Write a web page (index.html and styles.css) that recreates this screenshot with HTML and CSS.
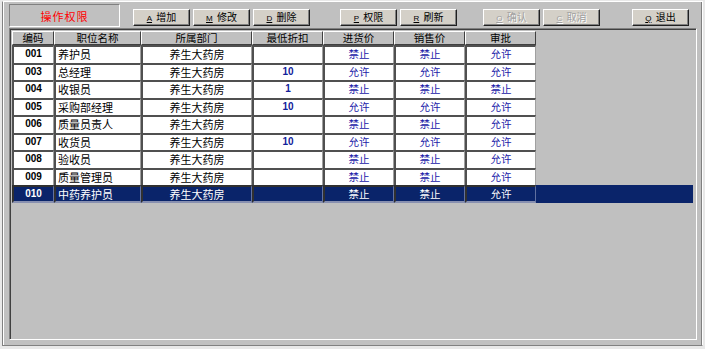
FILE: index.html
```html
<!DOCTYPE html>
<html lang="zh-CN">
<head>
    <meta charset="UTF-8">
    <title>操作权限</title>
    <link rel="stylesheet" href="styles.css">
</head>
<body>
    <div class="window">
        <div class="toolbar">
            <div class="caption">操作权限</div>
            <div class="btn-group g1">
                <button class="btn"><u>A</u> 增加</button>
                <button class="btn"><u>M</u> 修改</button>
                <button class="btn"><u>D</u> 删除</button>
            </div>
            <div class="btn-group g2">
                <button class="btn"><u>P</u> 权限</button>
                <button class="btn"><u>R</u> 刷新</button>
            </div>
            <div class="btn-group g3">
                <button class="btn" disabled><u>O</u> 确认</button>
                <button class="btn" disabled><u>C</u> 取消</button>
            </div>
            <div class="btn-group g4">
                <button class="btn"><u>Q</u> 退出</button>
            </div>
        </div>

        <div class="grid">
            <div class="row head">
                <div class="cell">编码</div>
                <div class="cell">职位名称</div>
                <div class="cell">所属部门</div>
                <div class="cell">最低折扣</div>
                <div class="cell">进货价</div>
                <div class="cell">销售价</div>
                <div class="cell">审批</div>
            </div>
            <div id="rows"></div>
        </div>
    </div>

<script>
const data = [
    ['001', '养护员', '', '禁止', '禁止', '允许'],
    ['003', '总经理', '10', '允许', '允许', '允许'],
    ['004', '收银员', '1', '禁止', '禁止', '禁止'],
    ['005', '采购部经理', '10', '允许', '允许', '允许'],
    ['006', '质量员责人', '', '禁止', '禁止', '允许'],
    ['007', '收货员', '10', '允许', '允许', '允许'],
    ['008', '验收员', '', '禁止', '禁止', '允许'],
    ['009', '质量管理员', '', '禁止', '禁止', '允许'],
    ['010', '中药养护员', '', '禁止', '禁止', '允许']
];

const rows = document.getElementById('rows');
data.forEach((r, i) => {
    const sel = i === data.length - 1 ? ' selected' : '';
    rows.innerHTML += `<div class="row${sel}">
        <div class="cell code">${r[0]}</div>
        <div class="cell name">${r[1]}</div>
        <div class="cell">养生大药房</div>
        <div class="cell num">${r[2]}</div>
        <div class="cell perm">${r[3]}</div>
        <div class="cell perm">${r[4]}</div>
        <div class="cell perm">${r[5]}</div>
    </div>`;
});
</script>
</body>
</html>
```

FILE: styles.css
```css
body {
    margin: 0;
    background: #e8e8e8;
    font-family: "Noto Sans CJK SC", "Liberation Sans", sans-serif;
    font-size: 11px;
}

.window {
    margin: 1px 2px;
    height: 345px;
    box-sizing: border-box;
    background: #c0c0c0;
    border-left: 1px solid #808080;
    border-top: 1px solid #ffffff;
    border-right: 1px solid #ffffff;
    border-bottom: 1px solid #808080;
    box-shadow: inset -1px 0 0 #808080, inset 1px 0 0 #ffffff;
    padding: 2px 5px 0 6px;
}

/* --- toolbar --- */
.toolbar {
    display: flex;
    height: 24px;
}

.caption {
    width: 111px;
    height: 23px;
    box-sizing: border-box;
    border-top: 1px solid #808080;
    border-left: 1px solid #808080;
    border-right: 1px solid #ffffff;
    border-bottom: 1px solid #ffffff;
    color: #ff0000;
    display: flex;
    align-items: center;
    justify-content: center;
    letter-spacing: 1px;
}

.btn-group {
    display: flex;
    gap: 3px;
    margin-top: 5px;
}
.g1 { margin-left: 13px; }
.g2 { margin-left: 30px; }
.g3 { margin-left: 26px; }
.g4 { margin-left: 32px; }

.btn {
    width: 57px;
    height: 17px;
    padding: 0;
    font-family: inherit;
    font-size: 10px;
    color: #000;
    background: #d4d0c8;
    border-top: 1px solid #ffffff;
    border-left: 1px solid #ffffff;
    border-right: 1px solid #202020;
    border-bottom: 1px solid #202020;
    box-shadow: inset -1px -1px 0 #808080;
    line-height: 14px;
}
.btn u { font-family: "Liberation Sans", sans-serif; font-size: 8px; margin-right: 2px; }
.btn:disabled { color: #a0a0a0; text-shadow: 1px 1px 0 #ffffff; }

/* --- grid --- */
.grid {
    height: 312px;
    box-sizing: border-box;
    border-top: 1px solid #808080;
    border-left: 1px solid #808080;
    border-right: 1px solid #ffffff;
    border-bottom: 1px solid #ffffff;
    box-shadow: inset 1px 1px 0 #404040;
    padding: 2px 2px 0 2px;
}

.row {
    display: grid;
    grid-template-columns: 42px 87px 111px 71px 71px 71px 71px;
    height: 17.5px;
}

.cell {
    box-sizing: border-box;
    background: #ffffff;
    border-top: 2px solid #505050;
    border-left: 2px solid #505050;
    border-right: 1px solid #a0a0a0;
    text-align: center;
    line-height: 14px;
    overflow: hidden;
    white-space: nowrap;
}

.head { height: 14px; }
.head .cell {
    background: #c0c0c0;
    border-top: 1px solid #ffffff;
    border-left: 1px solid #ffffff;
    border-right: 1px solid #404040;
    border-bottom: 1px solid #404040;
    line-height: 12px;
    font-size: 10.5px;
}

.code, .num {
    font-family: "Liberation Sans", sans-serif;
    font-weight: bold;
    font-size: 10px;
}
.num { color: #10209a; }
.name { text-align: left; padding-left: 2px; }
.perm { color: #2020a8; font-size: 10.5px; }

.selected {
    background: #0a246a;
    margin-right: 1px;
}
.selected .cell {
    background: #0a246a;
    color: #ffffff;
    border-top-color: #303030;
    border-left-color: #303030;
    border-right-color: #6070a0;
    border-bottom: 2px solid #8890b0;
}
```
